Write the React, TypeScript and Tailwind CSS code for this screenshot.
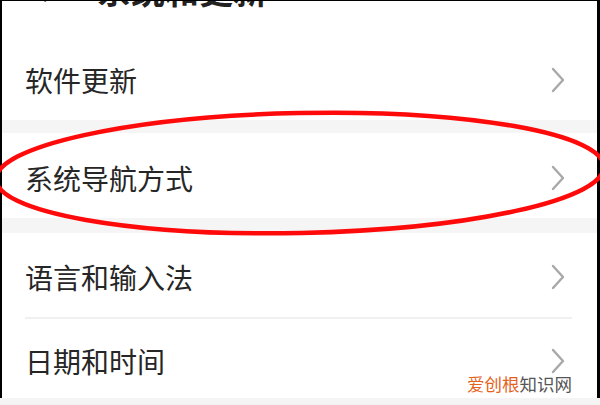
import React from "react";

const font = { fontFamily: '"Noto Sans CJK SC", "Noto Sans", sans-serif' };

function Chevron() {
  return (
    <svg width="14" height="26" viewBox="0 0 14 26" className="shrink-0">
      <polyline points="2,2 12,13 2,24" fill="none" stroke="#a8a8a8" strokeWidth="2.4" strokeLinecap="round" strokeLinejoin="round" />
    </svg>
  );
}

function Row({ label, h }: { label: string; h: string }) {
  return (
    <div className={`flex items-center justify-between pl-[23px] pr-[32px] pt-[4px] bg-white ${h}`}>
      <span className="text-[28px] leading-none text-[#262626] tracking-[0px]">{label}</span>
      <Chevron />
    </div>
  );
}

export default function App() {
  return (
    <div className="relative w-[600px] h-[405px] bg-black overflow-hidden" style={font}>
      <div className="flex flex-col h-[397px] ml-[2px] mr-[3px] mt-[1px] bg-white">
        <div className="h-[35px] overflow-hidden flex items-start">
          <div className="flex items-start -mt-[28px] text-[34px] leading-none font-bold text-[#222]">
            <span className="ml-[36px] w-[59px]">‹</span>
            <span>系统和更新</span>
          </div>
        </div>
        <Row label="软件更新" h="h-[84px]" />
        <div className="h-[13px] bg-[#f5f5f5]" />
        <Row label="系统导航方式" h="h-[85px]" />
        <div className="h-[15px] bg-[#f5f5f5]" />
        <Row label="语言和输入法" h="h-[84px]" />
        <div className="ml-[23px] mr-[25px] h-[2px] bg-[#f0f0f0]" />
        <Row label="日期和时间" h="h-[79px]" />
      </div>
      <div className="h-[7px] bg-[#f4f4f4]" />
      <svg className="absolute left-0 top-0" width="600" height="405" viewBox="0 0 600 405">
        <ellipse cx="300" cy="173" rx="304" ry="60" fill="none" stroke="#ff0a0a" strokeWidth="4.5" transform="rotate(-1.2 300 173)" />
      </svg>
      <div className="absolute left-[467px] top-[375px] text-[17.5px] leading-none whitespace-nowrap">
        <span className="text-[#e5621c]">爱创根</span>
        <span className="text-[#555]">知识网</span>
      </div>
    </div>
  );
}
